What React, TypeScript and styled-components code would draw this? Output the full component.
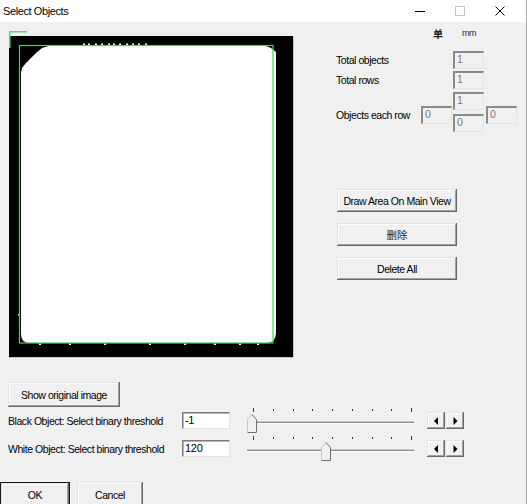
import React from "react";
import styled, { createGlobalStyle, css } from "styled-components";

const GlobalStyle = createGlobalStyle`
  html, body { margin: 0; padding: 0; background: #f0f0f0; }
  body { font-family: "Liberation Sans", Arial, sans-serif; }
  #root { width: 527px; height: 504px; }
`;

const Window = styled.div`
  width: 527px;
  height: 504px;
  box-sizing: border-box;
  border-right: 1px solid #a9a9a9;
  display: flex;
  flex-direction: column;
  overflow: hidden;
  background: #f0f0f0;
  font-family: "Liberation Sans", Arial, sans-serif;
  font-size: 10.5px;
  letter-spacing: -0.45px;
  color: #000;
`;

const TitleBar = styled.div`
  flex: none;
  height: 22px;
  background: #fff;
  display: flex;
  align-items: center;
  padding-left: 3px;
  padding-right: 6px;
`;

const Title = styled.div`
  flex: 1;
  font-size: 11px;
  letter-spacing: -0.4px;
`;

const Caption = styled.div`
  display: flex;
  height: 100%;
`;

const CaptionBtn = styled.div`
  width: 40px;
  height: 100%;
  display: flex;
  align-items: center;
  justify-content: center;
`;

const TopSection = styled.div`
  display: flex;
  margin-top: 9px;
  padding-left: 9px;
`;

const RightPanel = styled.div`
  display: flex;
  flex-direction: column;
  margin-left: 41px;
  margin-top: -5px;
`;

const UnitsRow = styled.div`
  height: 14px;
  display: flex;
  align-items: center;
  padding-left: 97px;
  gap: 19px;
`;

const UnitCJK = styled.span`
  font-family: "Noto Sans CJK SC", sans-serif;
  font-size: 10px;
  font-weight: 700;
  letter-spacing: 0;
  color: #222;
`;

const UnitMM = styled.span`
  font-size: 9px;
  letter-spacing: -0.4px;
  color: #2a2a3a;
`;

const FieldRow = styled.div<{ $mt: number }>`
  display: flex;
  align-items: center;
  margin-top: ${(p) => p.$mt}px;
`;

const FieldLabel = styled.span<{ $w: number }>`
  width: ${(p) => p.$w}px;
  flex: none;
`;

const DisabledEdit = styled.div`
  box-sizing: border-box;
  width: 31px;
  height: 18px;
  border-top: 2px solid #8a8a8a;
  border-left: 2px solid #8a8a8a;
  border-right: 1px solid #e4e4e4;
  border-bottom: 1px solid #e4e4e4;
  background: #f0f0f0;
  color: #7a7a7a;
  padding-left: 2px;
  line-height: 13px;
  font-size: 10.5px;
`;

const Cluster = styled.div`
  display: flex;
  align-items: flex-start;
  margin-top: 3px;
`;

const ClusterLabel = styled.span`
  width: 85px;
  flex: none;
  margin-top: 14px;
  line-height: 18px;
`;

const SideEdit = styled(DisabledEdit)<{ $ml?: number }>`
  margin-top: 14px;
  margin-left: ${(p) => p.$ml ?? 0}px;
`;

const StackCol = styled.div`
  display: flex;
  flex-direction: column;
  gap: 4px;
  margin-left: 1px;
`;

const ActionGroup = styled.div`
  display: flex;
  flex-direction: column;
  gap: 11px;
  margin-top: 57px;
  margin-left: 1px;
`;

const Button = styled.button<{ $w: number; $h: number; $default?: boolean }>`
  box-sizing: border-box;
  width: ${(p) => p.$w}px;
  height: ${(p) => p.$h}px;
  flex: none;
  padding: 0;
  margin: 0;
  border: none;
  background: #f0f0f0;
  font-family: inherit;
  font-size: 10.5px;
  letter-spacing: -0.45px;
  color: #000;
  box-shadow: inset -1px -1px #696969, inset 1px 1px #e3e3e3,
    inset -2px -2px #a0a0a0, inset 2px 2px #ffffff;
  ${(p) =>
    p.$default &&
    css`
      border: 1px solid #1a1a1a;
    `}
`;

const CJKText = styled.span`
  font-family: "Noto Sans CJK SC", sans-serif;
  font-size: 10.5px;
  letter-spacing: 0;
  color: #222;
`;

const ShowButton = styled(Button)`
  margin-top: 23px;
  margin-left: 8px;
`;

const ThresholdRows = styled.div`
  display: flex;
  flex-direction: column;
  gap: 3px;
  margin-top: 1px;
  margin-left: 8px;
`;

const ThresholdRow = styled.div`
  display: flex;
  align-items: center;
  height: 25px;
`;

const ThresholdLabel = styled.span`
  width: 174px;
  flex: none;
`;

const Edit = styled.div`
  box-sizing: border-box;
  width: 48px;
  height: 17px;
  flex: none;
  background: #fff;
  border-top: 1px solid #7a7a7a;
  border-left: 1px solid #7a7a7a;
  border-right: 1px solid #e3e3e3;
  border-bottom: 1px solid #e3e3e3;
  box-shadow: inset 1px 1px #b5b5b5;
  padding-left: 2px;
  line-height: 15px;
  font-size: 11px;
  letter-spacing: -0.3px;
`;

const SliderBox = styled.div`
  position: relative;
  width: 167px;
  height: 25px;
  margin-left: 17px;
  flex: none;
`;

const Ticks = styled.div`
  display: flex;
  justify-content: space-between;
  align-items: center;
  width: 159px;
  height: 4px;
  margin-left: 6px;
`;

const Tick = styled.span<{ $end?: boolean }>`
  width: 1px;
  height: ${(p) => (p.$end ? 4 : 2)}px;
  background: #3a3a3a;
`;

const Track = styled.div`
  margin-top: 10px;
  height: 1px;
  background: #8c8c8c;
  border-bottom: 1px solid #ffffff;
  box-shadow: 0 -1px #c8c8c8;
`;

const Thumb = styled.svg`
  position: absolute;
  top: 6px;
`;

const Spin = styled.div`
  display: flex;
  gap: 1px;
  margin-left: 13px;
`;

const SpinBtn = styled(Button)`
  display: flex;
  align-items: center;
  justify-content: center;
`;

const DialogButtons = styled.div`
  display: flex;
  gap: 7px;
  margin-top: 21px;
`;

const TICKS = Array.from({ length: 9 });

function Slider({ value, min, max }: { value: number; min: number; max: number }) {
  const left = Math.round(((value - min) / (max - min)) * 157);
  return (
    <SliderBox>
      <Ticks>
        {TICKS.map((_, i) => (
          <Tick key={i} $end={i === 0 || i === TICKS.length - 1} />
        ))}
      </Ticks>
      <Track />
      <Thumb width="11" height="20" viewBox="0 0 11 20" style={{ left }}>
        <polygon points="0.5,5.5 5,0.5 9.5,5.5 9.5,18.5 0.5,18.5" fill="#f0f0f0" />
        <polyline points="0.5,18 0.5,5.5 5,0.5" fill="none" stroke="#c8c8c8" />
        <polyline points="5,0.5 9.5,5.5 9.5,18.5 0.5,18.5" fill="none" stroke="#6e6e6e" />
      </Thumb>
    </SliderBox>
  );
}

function Arrow({ dir }: { dir: "l" | "r" }) {
  return (
    <svg width="5" height="8" viewBox="0 0 5 8">
      {dir === "l" ? <polygon points="4,0 4,8 0,4" fill="#000" /> : <polygon points="0.5,0 0.5,8 4.5,4" fill="#000" />}
    </svg>
  );
}

function ImageView() {
  const topSpecks = [74, 79, 86, 92, 99, 104, 110, 117, 123, 129, 136];
  const bottomSpecks = [30, 60, 95, 140, 175, 205, 230, 248];
  return (
    <svg width="286" height="328" viewBox="0 0 286 328" style={{ flex: "none", display: "block" }}>
      <rect x="0" y="5" width="285" height="322" fill="#c8c8c8" />
      <rect x="0" y="5" width="284" height="321" fill="#000" />
      <path
        d="M41,14.5 L256,14.5 L262,17 L267,21 L267,302 Q267,312 257,312 L21,312 Q12,312 12,303 L12,42 L13,37 L17,32 L22,27 L27,22 L33,17 Z"
        fill="#fff"
      />
      {topSpecks.map((x) => (
        <rect key={x} x={x} y="12.5" width="2" height="1.5" fill="#fff" />
      ))}
      {bottomSpecks.map((x) => (
        <rect key={x} x={x} y="312.5" width="2" height="1.5" fill="#fff" />
      ))}
      <rect x="9" y="283" width="1.5" height="1.5" fill="#fff" />
      <rect x="265" y="277" width="1.5" height="1.5" fill="#fff" />
      <rect x="10.5" y="14.5" width="253.5" height="297.5" fill="none" stroke="#3fdc3f" strokeWidth="1.2" />
      <path d="M0.75,17 L0.75,0.75 L18,0.75" fill="none" stroke="#4fe34f" strokeWidth="1.5" />
    </svg>
  );
}

export default function App() {
  return (
    <>
      <GlobalStyle />
      <Window>
        <TitleBar>
          <Title>Select Objects</Title>
          <Caption>
            <CaptionBtn>
              <svg width="10" height="10" viewBox="0 0 10 10">
                <line x1="0" y1="5.5" x2="10" y2="5.5" stroke="#000" strokeWidth="1" />
              </svg>
            </CaptionBtn>
            <CaptionBtn>
              <svg width="10" height="10" viewBox="0 0 10 10">
                <rect x="0.5" y="0.5" width="9" height="9" fill="none" stroke="#c9c9c9" strokeWidth="1" />
              </svg>
            </CaptionBtn>
            <CaptionBtn>
              <svg width="10" height="10" viewBox="0 0 10 10">
                <path d="M0.5,0.5 L9.5,9.5 M9.5,0.5 L0.5,9.5" stroke="#000" strokeWidth="1" />
              </svg>
            </CaptionBtn>
          </Caption>
        </TitleBar>

        <TopSection>
          <ImageView />
          <RightPanel>
            <UnitsRow>
              <UnitCJK>单</UnitCJK>
              <UnitMM>mm</UnitMM>
            </UnitsRow>
            <FieldRow $mt={11}>
              <FieldLabel $w={117}>Total objects</FieldLabel>
              <DisabledEdit>1</DisabledEdit>
            </FieldRow>
            <FieldRow $mt={2}>
              <FieldLabel $w={117}>Total rows</FieldLabel>
              <DisabledEdit>1</DisabledEdit>
            </FieldRow>
            <Cluster>
              <ClusterLabel>Objects each row</ClusterLabel>
              <SideEdit>0</SideEdit>
              <StackCol>
                <DisabledEdit>1</DisabledEdit>
                <DisabledEdit>0</DisabledEdit>
              </StackCol>
              <SideEdit $ml={2}>0</SideEdit>
            </Cluster>
            <ActionGroup>
              <Button $w={120} $h={23}>Draw Area On Main View</Button>
              <Button $w={120} $h={23}>
                <CJKText>删除</CJKText>
              </Button>
              <Button $w={120} $h={23}>Delete All</Button>
            </ActionGroup>
          </RightPanel>
        </TopSection>

        <ShowButton $w={112} $h={25}>Show original image</ShowButton>

        <ThresholdRows>
          <ThresholdRow>
            <ThresholdLabel>Black Object: Select binary threshold</ThresholdLabel>
            <Edit>-1</Edit>
            <Slider value={-1} min={-1} max={255} />
            <Spin>
              <SpinBtn $w={18} $h={17}><Arrow dir="l" /></SpinBtn>
              <SpinBtn $w={18} $h={17}><Arrow dir="r" /></SpinBtn>
            </Spin>
          </ThresholdRow>
          <ThresholdRow>
            <ThresholdLabel>White Object: Select binary threshold</ThresholdLabel>
            <Edit>120</Edit>
            <Slider value={120} min={-1} max={255} />
            <Spin>
              <SpinBtn $w={18} $h={17}><Arrow dir="l" /></SpinBtn>
              <SpinBtn $w={18} $h={17}><Arrow dir="r" /></SpinBtn>
            </Spin>
          </ThresholdRow>
        </ThresholdRows>

        <DialogButtons>
          <Button $w={70} $h={25} $default>OK</Button>
          <Button $w={66} $h={25}>Cancel</Button>
        </DialogButtons>
      </Window>
    </>
  );
}
